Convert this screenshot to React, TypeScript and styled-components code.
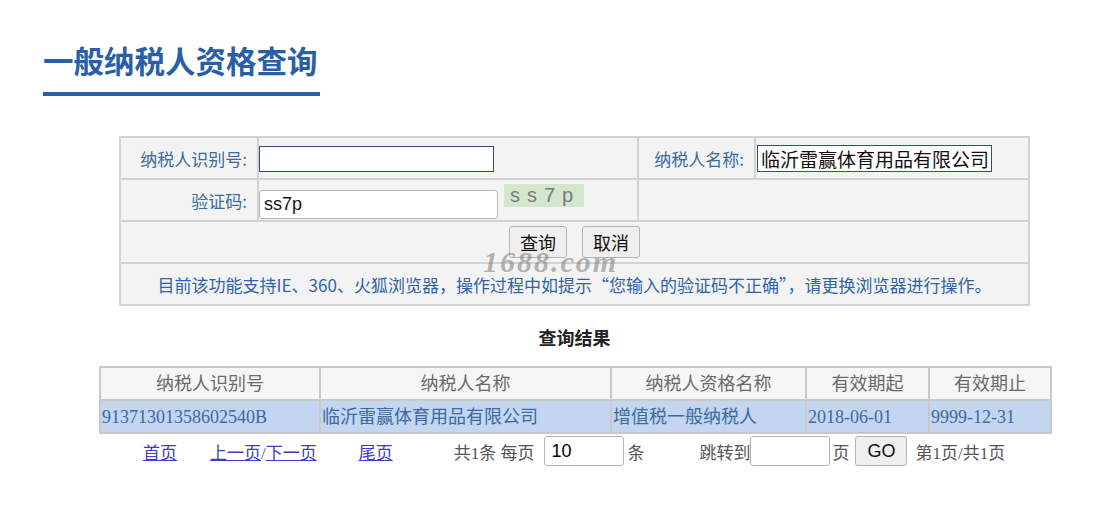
import React from 'react';
import styled, { createGlobalStyle } from 'styled-components';

const GlobalStyle = createGlobalStyle`
  html, body {
    margin: 0;
    padding: 0;
    background: #fff;
  }
  body {
    font-family: 'Noto Sans CJK SC', 'Liberation Sans', sans-serif;
  }
`;

const SANS = `'Liberation Sans', 'Noto Sans CJK SC', sans-serif`;
const SERIF = `'Liberation Serif', 'Noto Sans CJK SC', serif`;

const Page = styled.div`
  width: 1100px;
  height: 518px;
  overflow: hidden;
  position: relative;
`;

const Header = styled.header`
  padding: 40px 0 0 43px;
`;

const Title = styled.h1`
  margin: 0;
  font-family: 'Noto Sans CJK SC', sans-serif;
  font-size: 30.5px;
  line-height: 40px;
  font-weight: 700;
  color: #2a5ea8;
`;

const TitleLine = styled.div`
  margin-top: 12px;
  width: 277px;
  height: 4px;
  background: #2a5ea8;
`;

const Main = styled.main`
  margin-left: 99px;
  width: 951px;
  position: relative;
`;

const FormTable = styled.table`
  margin: 40px auto 0;
  width: 909px;
  border-collapse: collapse;
  table-layout: fixed;
  background: #f3f3f3;
  border: 2px solid #d3d3d3;
  td {
    border: 2px solid #d3d3d3;
    height: 40px;
    padding: 0;
  }
`;

const Label = styled.td`
  text-align: right;
  padding-right: 10px !important;
  font-size: 17px;
  color: #3a6c9e;
  font-family: 'Noto Sans CJK SC', sans-serif;
`;

const Field = styled.td<{ $center?: boolean }>`
  text-align: ${(p) => (p.$center ? 'center' : 'left')};
`;

const TextInput = styled.input<{ $variant?: 'dark' | 'soft'; $w: number; $h: number }>`
  box-sizing: border-box;
  width: ${(p) => p.$w}px;
  height: ${(p) => p.$h}px;
  margin: 0;
  padding: 0 4px;
  vertical-align: middle;
  font-size: 18px;
  font-family: ${SANS};
  color: #111;
  background: #fff;
  border: ${(p) => (p.$variant === 'dark' ? '1px solid #2d4f82' : '1px solid #b5b5b5')};
  border-radius: ${(p) => (p.$variant === 'dark' ? '0' : '3px')};
  outline: none;
`;

const NameInput = styled(TextInput)`
  margin-left: 1px;
  padding: 0 3px;
  font-size: 19px;
  font-family: 'Noto Sans CJK SC', sans-serif;
`;

const CaptchaRow = styled.div`
  display: flex;
  align-items: center;
  gap: 6px;
`;

const CodeInput = styled(TextInput)`
  margin-top: 8px;
`;

const Captcha = styled.span`
  display: inline-block;
  width: 80px;
  height: 23px;
  margin-top: -10px;
  background: #d3e7cf;
  color: #7b7b7b;
  font-family: ${SANS};
  font-size: 20px;
  line-height: 23px;
  letter-spacing: 7px;
  text-indent: 6px;
`;

const Button = styled.button`
  height: 32px;
  width: 58px;
  padding: 0;
  margin: 0 7.5px;
  background: #efefef;
  border: 1px solid #b3b3b3;
  border-radius: 3px;
  font-size: 18px;
  font-family: 'Noto Sans CJK SC', sans-serif;
  color: #111;
  vertical-align: middle;
`;

const Notice = styled.td`
  text-align: center;
  font-size: 17px;
  color: #2f64a8;
  font-family: 'Noto Sans CJK SC', sans-serif;
`;

const Watermark = styled.div`
  position: absolute;
  left: 384px;
  top: 109px;
  font-family: ${SERIF};
  font-style: italic;
  font-weight: 700;
  font-size: 30px;
  letter-spacing: 2px;
  color: rgba(120, 120, 120, 0.55);
  pointer-events: none;
`;

const ResultTitle = styled.h2`
  margin: 20px 0 0;
  text-align: center;
  font-family: ${SERIF};
  font-size: 18px;
  line-height: 26px;
  font-weight: 700;
  color: #222;
`;

const ResultTable = styled.table`
  margin-top: 14px;
  width: 951px;
  border-collapse: collapse;
  table-layout: fixed;
  border: 2px solid #c9c9c9;
  th, td {
    border: 2px solid #c9c9c9;
    height: 31px;
    padding: 0;
    line-height: 22px;
    font-family: ${SERIF};
    font-size: 18px;
  }
  th {
    background: #f6f6f6;
    font-weight: 400;
    color: #6a6a6a;
    text-align: center;
  }
  td {
    background: #c3d5ef;
    color: #3b6aa4;
    text-align: left;
    padding-left: 1px;
  }
`;

const Pager = styled.div`
  display: flex;
  align-items: center;
  height: 32px;
  margin-top: 1px;
  font-family: ${SERIF};
  font-size: 17px;
  color: #555;
`;

const PagerItem = styled.span<{ $ml: number }>`
  margin-left: ${(p) => p.$ml}px;
  white-space: nowrap;
`;

const PagerLink = styled.a`
  color: #3d3dbf;
  text-decoration: underline;
  cursor: pointer;
`;

const PagerInput = styled.input<{ $ml: number }>`
  box-sizing: border-box;
  width: 80px;
  height: 30px;
  margin-left: ${(p) => p.$ml}px;
  padding: 0 6px;
  font-family: ${SANS};
  font-size: 18px;
  border: 1px solid #b5b5b5;
  border-radius: 3px;
  outline: none;
`;

const GoButton = styled.button`
  margin-left: 6px;
  width: 52px;
  height: 30px;
  background: #efefef;
  border: 1px solid #b3b3b3;
  border-radius: 3px;
  font-family: ${SANS};
  font-size: 18px;
  color: #111;
  padding: 0;
`;

const columns = ['纳税人识别号', '纳税人名称', '纳税人资格名称', '有效期起', '有效期止'];
const widths = [220, 291, 195, 123, 122];
const row = ['91371301358602540B', '临沂雷赢体育用品有限公司', '增值税一般纳税人', '2018-06-01', '9999-12-31'];

export default function App() {
  return (
    <Page>
      <GlobalStyle />
      <Header>
        <Title>一般纳税人资格查询</Title>
        <TitleLine />
      </Header>
      <Main>
        <FormTable>
          <colgroup>
            <col style={{ width: 138 }} />
            <col style={{ width: 380 }} />
            <col style={{ width: 117 }} />
            <col style={{ width: 274 }} />
          </colgroup>
          <tbody>
            <tr>
              <Label>纳税人识别号:</Label>
              <Field>
                <TextInput $variant="dark" $w={235} $h={26} defaultValue="" />
              </Field>
              <Label>纳税人名称:</Label>
              <Field>
                <NameInput $variant="dark" $w={235} $h={27} defaultValue="临沂雷赢体育用品有限公司" />
              </Field>
            </tr>
            <tr>
              <Label>验证码:</Label>
              <Field>
                <CaptchaRow>
                  <CodeInput $variant="soft" $w={239} $h={29} defaultValue="ss7p" />
                  <Captcha>ss7p</Captcha>
                </CaptchaRow>
              </Field>
              <Field colSpan={2} />
            </tr>
            <tr>
              <Field colSpan={4} $center>
                <Button>查询</Button>
                <Button>取消</Button>
              </Field>
            </tr>
            <tr>
              <Notice colSpan={4}>
                目前该功能支持IE、360、火狐浏览器，操作过程中如提示“您输入的验证码不正确”，请更换浏览器进行操作。
              </Notice>
            </tr>
          </tbody>
        </FormTable>
        <Watermark>1688.com</Watermark>

        <ResultTitle>查询结果</ResultTitle>
        <ResultTable>
          <colgroup>
            {widths.map((w, i) => (
              <col key={i} style={{ width: w }} />
            ))}
          </colgroup>
          <thead>
            <tr>
              {columns.map((c) => (
                <th key={c}>{c}</th>
              ))}
            </tr>
          </thead>
          <tbody>
            <tr>
              {row.map((c) => (
                <td key={c}>{c}</td>
              ))}
            </tr>
          </tbody>
        </ResultTable>
        <Pager>
          <PagerItem $ml={44}><PagerLink>首页</PagerLink></PagerItem>
          <PagerItem $ml={33}>
            <PagerLink>上一页</PagerLink>/<PagerLink>下一页</PagerLink>
          </PagerItem>
          <PagerItem $ml={42}><PagerLink>尾页</PagerLink></PagerItem>
          <PagerItem $ml={61}>共1条 每页</PagerItem>
          <PagerInput $ml={10} defaultValue="10" />
          <PagerItem $ml={3}>条</PagerItem>
          <PagerItem $ml={55}>跳转到</PagerItem>
          <PagerInput $ml={0} defaultValue="" />
          <PagerItem $ml={2}>页</PagerItem>
          <GoButton>GO</GoButton>
          <PagerItem $ml={8}>第1页/共1页</PagerItem>
        </Pager>
      </Main>
    </Page>
  );
}
